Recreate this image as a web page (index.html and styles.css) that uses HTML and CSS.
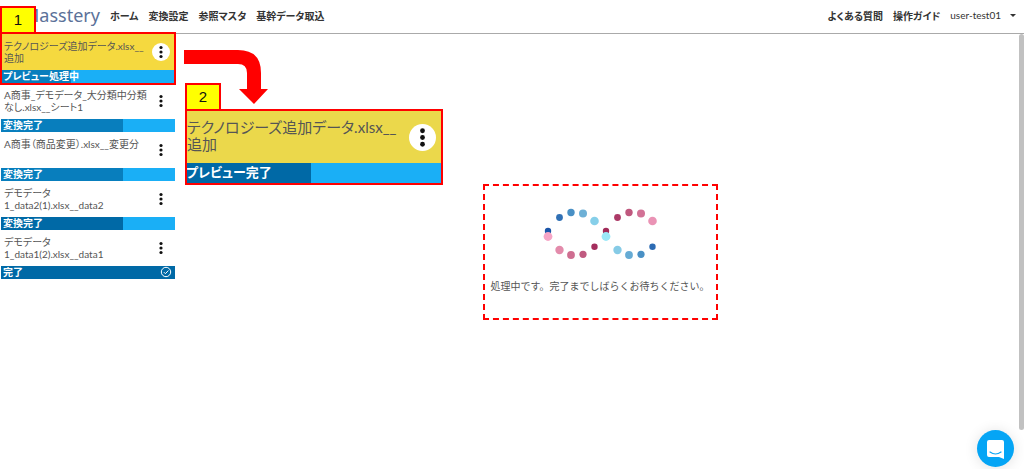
FILE: index.html
```html
<!DOCTYPE html>
<html lang="ja">
<head>
    <meta charset="UTF-8">
    <meta name="viewport" content="width=device-width, initial-scale=1.0">
    <title>Masstery</title>
    <link rel="stylesheet" href="styles.css">
</head>
<body>
    <header class="header">
        <a class="logo" href="#">Masstery</a>
        <nav class="menu">
            <a href="#">ホーム</a>
            <a href="#">変換設定</a>
            <a href="#">参照マスタ</a>
            <a href="#">基幹データ取込</a>
        </nav>
        <nav class="menu menu-right">
            <a href="#">よくある質問</a>
            <a href="#">操作ガイド</a>
            <button class="user" type="button">user-test01 <span class="caret"></span></button>
        </nav>
    </header>

    <div class="page">
        <aside class="files">
            <div class="file active">
                <div class="file-top">
                    <span class="file-name">テクノロジーズ追加データ.xlsx__<br>追加</span>
                    <button class="more" type="button" aria-label="メニュー"><svg viewBox="0 0 18 18"><circle cx="9" cy="4.5" r="1.6"/><circle cx="9" cy="9" r="1.6"/><circle cx="9" cy="13.5" r="1.6"/></svg></button>
                </div>
                <div class="bar"><div class="fill mid" style="width: 40%"></div><span>プレビュー処理中</span></div>
                <span class="mark">1</span>
            </div>
            <div class="file">
                <div class="file-top">
                    <span class="file-name">A商事_デモデータ_大分類中分類<br>なし.xlsx__シート1</span>
                    <button class="more" type="button" aria-label="メニュー"><svg viewBox="0 0 18 18"><circle cx="9" cy="4.5" r="1.6"/><circle cx="9" cy="9" r="1.6"/><circle cx="9" cy="13.5" r="1.6"/></svg></button>
                </div>
                <div class="bar"><div class="fill mid" style="width: 70%"></div><span>変換完了</span></div>
            </div>
            <div class="file">
                <div class="file-top">
                    <span class="file-name">A商事（商品変更）.xlsx__変更分</span>
                    <button class="more" type="button" aria-label="メニュー"><svg viewBox="0 0 18 18"><circle cx="9" cy="4.5" r="1.6"/><circle cx="9" cy="9" r="1.6"/><circle cx="9" cy="13.5" r="1.6"/></svg></button>
                </div>
                <div class="bar"><div class="fill mid" style="width: 70%"></div><span>変換完了</span></div>
            </div>
            <div class="file">
                <div class="file-top">
                    <span class="file-name">デモデータ<br>1_data2(1).xlsx__data2</span>
                    <button class="more" type="button" aria-label="メニュー"><svg viewBox="0 0 18 18"><circle cx="9" cy="4.5" r="1.6"/><circle cx="9" cy="9" r="1.6"/><circle cx="9" cy="13.5" r="1.6"/></svg></button>
                </div>
                <div class="bar"><div class="fill" style="width: 70%"></div><span>変換完了</span></div>
            </div>
            <div class="file">
                <div class="file-top">
                    <span class="file-name">デモデータ<br>1_data1(2).xlsx__data1</span>
                    <button class="more" type="button" aria-label="メニュー"><svg viewBox="0 0 18 18"><circle cx="9" cy="4.5" r="1.6"/><circle cx="9" cy="9" r="1.6"/><circle cx="9" cy="13.5" r="1.6"/></svg></button>
                </div>
                <div class="bar"><div class="fill" style="width: 100%"></div><span>完了</span>
                    <svg class="check" viewBox="0 0 12 12"><circle cx="6" cy="6" r="4.7"/><path d="M3.8 6.1 5.4 7.7 8.4 4.5"/></svg>
                </div>
            </div>
        </aside>

        <main class="main">
            <div class="loading">
                <svg class="dots" viewBox="0 0 130 60">
                    <circle cx="13" cy="29" r="3.2" fill="#1b55a8"/>
                    <circle cx="13" cy="34.5" r="4.4" fill="#f6a5c6"/>
                    <circle cx="24.5" cy="15.5" r="3.4" fill="#3070b5"/>
                    <circle cx="36" cy="10.5" r="3.7" fill="#4990c5"/>
                    <circle cx="48" cy="11.5" r="4" fill="#6eb0d6"/>
                    <circle cx="59.5" cy="19" r="4.3" fill="#86cfe9"/>
                    <circle cx="24.5" cy="48" r="4.2" fill="#e38bab"/>
                    <circle cx="36" cy="53" r="3.9" fill="#cf6e91"/>
                    <circle cx="48" cy="52.3" r="3.6" fill="#c05a80"/>
                    <circle cx="59.5" cy="44.7" r="3.2" fill="#a42d5d"/>
                    <circle cx="71" cy="29" r="3.2" fill="#a12a59"/>
                    <circle cx="71" cy="34.5" r="4.4" fill="#9be8f8"/>
                    <circle cx="82.5" cy="15.5" r="3.4" fill="#ac3a67"/>
                    <circle cx="94" cy="10.5" r="3.7" fill="#bf587e"/>
                    <circle cx="106" cy="11.5" r="4" fill="#d27296"/>
                    <circle cx="117.5" cy="19" r="4.3" fill="#ea93b5"/>
                    <circle cx="82.5" cy="48" r="4.2" fill="#86cbe6"/>
                    <circle cx="94" cy="53" r="3.9" fill="#66abd4"/>
                    <circle cx="106" cy="52.3" r="3.6" fill="#4990c5"/>
                    <circle cx="117.5" cy="44.7" r="3.2" fill="#2c6bb3"/>
                </svg>
                <p>処理中です。完了までしばらくお待ちください。</p>
            </div>
        </main>
        <div class="scrollbar"></div>
    </div>

    <svg class="arrow" viewBox="0 0 84 56"><path d="M0 1H54Q77 1 77 24V40H84L70 55 55 40H63V24Q63 15 54 15H0Z"/></svg>

    <div class="file active large">
        <div class="file-top">
            <span class="file-name">テクノロジーズ追加データ.xlsx__<br>追加</span>
            <button class="more" type="button" aria-label="メニュー"><svg viewBox="0 0 18 18"><circle cx="9" cy="4.5" r="1.6"/><circle cx="9" cy="9" r="1.6"/><circle cx="9" cy="13.5" r="1.6"/></svg></button>
        </div>
        <div class="bar"><div class="fill" style="width: 49%"></div><span>プレビュー完了</span></div>
        <span class="mark">2</span>
    </div>

    <button class="chat" type="button" aria-label="チャット">
        <svg viewBox="0 0 20 20"><path d="M3 1H16Q18 1 18 3V20L13 18H3Q1 18 1 16V3Q1 1 3 1Z" fill="#fff"/><path d="M4 13Q9.5 17 15 13" fill="none" stroke="#05a5f5" stroke-width="1.2" stroke-linecap="round"/></svg>
    </button>
</body>
</html>
```

FILE: styles.css
```css
* {
    box-sizing: border-box;
}

body {
    margin: 0;
    min-height: 100vh;
    display: flex;
    flex-direction: column;
    position: relative;
    background: #fff;
    color: #555;
    font-family: Lato, "Noto Sans CJK JP", sans-serif;
    font-size: 10px;
}

button {
    border: none;
    padding: 0;
    background: none;
    font: inherit;
    color: inherit;
    cursor: pointer;
}

a {
    color: inherit;
    text-decoration: none;
}

.header {
    height: 34px;
    display: flex;
    align-items: center;
    padding: 0 8px 3px 23px;
    border-bottom: 1px solid #aaa;
    color: #333;
}

.logo {
    margin-right: 10px;
    font-family: "Noto Sans", sans-serif;
    font-size: 18px;
    line-height: 24px;
    color: #5b7199;
}

.menu {
    display: flex;
    align-items: center;
    gap: 10px;
    font-weight: 600;
    font-feature-settings: "palt";
}

.menu-right {
    margin-left: auto;
}

.user {
    display: flex;
    align-items: center;
    gap: 9px;
    font-weight: 400;
}

.caret {
    border: 3px solid transparent;
    border-top-color: #333;
    border-bottom: none;
}

.page {
    flex: 1;
    display: flex;
    position: relative;
}

.files {
    width: 176px;
    padding: 0 1px;
}

.file {
    position: relative;
}

.file-top {
    height: 36px;
    display: flex;
    align-items: center;
    justify-content: space-between;
    padding: 0 5px 0 3px;
}

.file-name {
    align-self: flex-start;
    padding-top: 6px;
    line-height: 12px;
    white-space: nowrap;
    font-feature-settings: "palt";
}

.active .file-top {
    background: #f5d93f;
}

.more {
    width: 18px;
    height: 18px;
    flex: none;
    border-radius: 50%;
}

.active .more {
    background: #fff;
}

.more svg {
    display: block;
    width: 100%;
    fill: #111;
}

.bar {
    position: relative;
    height: 13px;
    background: #1aaff6;
    color: #fff;
    font-weight: 700;
    line-height: 12px;
    font-feature-settings: "palt";
}

.bar span {
    position: relative;
    display: block;
    padding-left: 2px;
}

.fill {
    position: absolute;
    top: 0;
    left: 0;
    height: 100%;
    background: #0069a6;
}

.fill.mid {
    background: #087ebd;
}

.check {
    position: absolute;
    top: 0;
    right: 3px;
    width: 12px;
    height: 12px;
    fill: none;
    stroke: #fff;
}

/* red frame with its number tab */
.active::after {
    content: "";
    position: absolute;
    inset: -2px -1px;
    border: 2px solid #f00;
}

.mark {
    position: absolute;
    z-index: 1;
    bottom: 100%;
    left: -1px;
    width: 36px;
    height: 28px;
    border: 2px solid #f00;
    background: #ff0;
    color: #111;
    font-family: "Liberation Sans", sans-serif;
    font-size: 15px;
    line-height: 24px;
    text-align: center;
}

.main {
    flex: 1;
    display: flex;
    align-items: center;
    justify-content: center;
}

.loading {
    display: flex;
    flex-direction: column;
    align-items: center;
    gap: 14px;
    padding: 16px 6px 22px;
    border: 2px dashed #f00;
}

.loading p {
    margin: 0;
    line-height: 20px;
}

.dots {
    width: 130px;
    height: 60px;
}

.scrollbar {
    position: absolute;
    top: 0;
    right: 0;
    width: 5px;
    height: 91%;
    border-radius: 3px;
    background: #c1c1c1;
}

.arrow {
    position: absolute;
    top: 49px;
    left: 184px;
    width: 84px;
    height: 56px;
    fill: #f00;
}

.large {
    position: absolute;
    top: 111px;
    left: 186px;
    width: 256px;
    font-size: 15px;
}

.large .file-top {
    height: 52px;
    padding: 0 6px 0 1px;
    background: #ebd84b;
}

.large .file-name {
    padding-top: 8px;
    line-height: 17px;
}

.large .more {
    width: 27px;
    height: 27px;
}

.large .bar {
    height: 20px;
    font-size: 13px;
    line-height: 18px;
}

.large .bar span {
    padding-left: 0;
}

.chat {
    position: fixed;
    right: 10px;
    bottom: 2px;
    width: 37px;
    height: 37px;
    display: flex;
    align-items: center;
    justify-content: center;
    border-radius: 50%;
    background: #05a5f5;
    box-shadow: 0 1px 14px rgba(0, 0, 0, 0.12);
}

.chat svg {
    width: 20px;
    height: 20px;
}
```
